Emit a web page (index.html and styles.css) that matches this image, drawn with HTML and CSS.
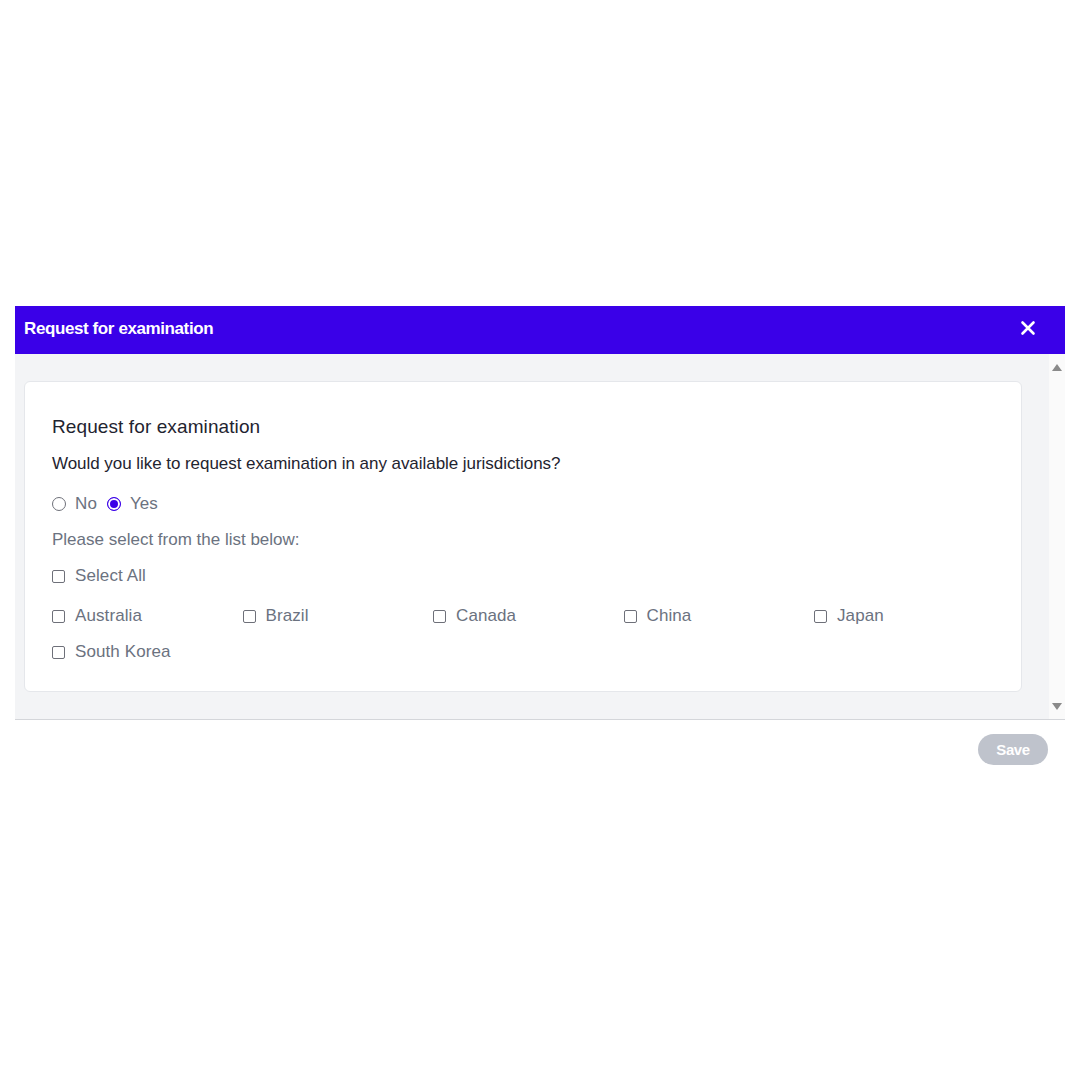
FILE: index.html
```html
<!DOCTYPE html>
<html>
<head>
<meta charset="utf-8">
<link rel="stylesheet" href="styles.css">
</head>
<body>
<div class="page">
  <div class="dialog">
    <div class="header">
      <span class="header-title">Request for examination</span>
      <svg class="close" width="16" height="16" viewBox="0 0 16 16"><path d="M2.5 2.5 L13.5 13.5 M13.5 2.5 L2.5 13.5" stroke="#fff" stroke-width="2.6" stroke-linecap="round"/></svg>
    </div>
    <div class="body">
      <div class="scroll">
        <div class="card">
          <div class="title">Request for examination</div>
          <div class="question">Would you like to request examination in any available jurisdictions?</div>
          <div class="radios">
            <label class="opt"><span class="radio"></span>No</label>
            <label class="opt"><span class="radio checked"></span>Yes</label>
          </div>
          <div class="hint">Please select from the list below:</div>
          <label class="opt select-all"><span class="box"></span>Select All</label>
          <div class="grid">
            <label class="opt"><span class="box"></span>Australia</label>
            <label class="opt"><span class="box"></span>Brazil</label>
            <label class="opt"><span class="box"></span>Canada</label>
            <label class="opt"><span class="box"></span>China</label>
            <label class="opt"><span class="box"></span>Japan</label>
            <label class="opt"><span class="box"></span>South Korea</label>
          </div>
        </div>
      </div>
      <div class="scrollbar">
        <span class="arrow up"></span>
        <span class="arrow down"></span>
      </div>
    </div>
    <div class="footer">
      <button class="save">Save</button>
    </div>
  </div>
</div>
</body>
</html>
```

FILE: styles.css
```css
* { box-sizing: border-box; }
html, body { margin: 0; padding: 0; background: #fff; }
body { font-family: "Liberation Sans", Arial, sans-serif; }
.page { padding: 306px 15px 0 15px; }
.dialog { width: 1050px; }
.header {
  height: 48px;
  background: #3a00e8;
  display: flex;
  align-items: center;
  justify-content: space-between;
  padding: 0 29px 0 9px;
}
.header-title { color: #fff; font-weight: bold; font-size: 17px; letter-spacing: -0.4px; margin-top: -2px; }
.close { display: block; margin-top: -5px; }
.body {
  background: #f3f4f6;
  display: flex;
  height: 366px;
  border-bottom: 1px solid #d4d6da;
}
.scroll { flex: 1; min-width: 0; padding: 27px 27px 0 9px; }
.scrollbar {
  width: 16px;
  flex: none;
  background: #fafafa;
  display: flex;
  flex-direction: column;
  justify-content: space-between;
  align-items: center;
  padding: 10px 0 9px;
}
.arrow { width: 0; height: 0; border-left: 5px solid transparent; border-right: 5px solid transparent; }
.arrow.up { border-bottom: 7px solid #8a8a8a; }
.arrow.down { border-top: 7px solid #8a8a8a; }
.card {
  background: #fff;
  border: 1px solid #e5e7eb;
  border-radius: 6px;
  height: 311px;
  padding: 33px 27px 0;
}
.title { font-size: 19px; line-height: 24px; color: #1f2430; letter-spacing: 0.1px; }
.question { font-size: 17px; line-height: 22px; color: #1f2430; margin-top: 14px; letter-spacing: -0.05px; }
.radios { display: flex; gap: 10px; margin-top: 18px; }
.opt { display: flex; align-items: center; font-size: 17px; line-height: 22px; color: #6b7280; letter-spacing: 0.1px; }
.radio {
  width: 14px; height: 14px; border-radius: 50%;
  border: 1px solid #6e7079; margin-right: 9px; background: #fff;
  display: inline-block;
}
.radio.checked { border-color: #3a00e8; box-shadow: inset 0 0 0 2px #fff; background: #3a00e8; }
.hint { font-size: 17px; line-height: 22px; color: #6b7280; margin-top: 14px; letter-spacing: 0; }
.select-all { margin-top: 14px; }
.box {
  width: 13px; height: 13px; border: 1px solid #6e7079; border-radius: 2px;
  margin-right: 10px; background: #fff; display: inline-block;
}
.grid { display: grid; grid-template-columns: repeat(4, 190.5px) 1fr; row-gap: 14px; margin-top: 18px; }
.footer { display: flex; justify-content: flex-end; padding: 14px 17px 0 0; }
.save {
  background: #bfc3cc; color: #fff; border: 0; border-radius: 16px;
  width: 70px; height: 31px; font-family: "Liberation Sans", Arial, sans-serif;
  font-weight: bold; font-size: 15px; letter-spacing: -0.4px; padding: 0;
}
```
